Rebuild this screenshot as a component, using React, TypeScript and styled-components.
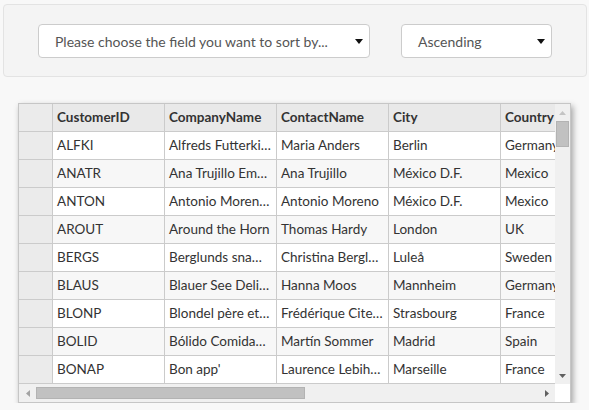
import styled, { createGlobalStyle } from "styled-components"

const GlobalStyle = createGlobalStyle`
  body {
    margin: 0;
    background: #f8f8f8;
    font-family: Lato, "Liberation Sans", sans-serif;
  }
`

const Page = styled.div`
  padding: 4px 2px 0 3px;
`

const SortPanel = styled.div`
  display: flex;
  gap: 31px;
  padding: 19px 34px 18px;
  border: 1px solid #e3e3e3;
  border-radius: 4px;
  background: #f4f4f4;
`

const Select = styled.div<{ $width: number }>`
  width: ${({ $width }) => $width}px;
  height: 34px;
  box-sizing: border-box;
  display: flex;
  align-items: center;
  justify-content: space-between;
  padding: 0 6px 0 16px;
  border: 1px solid #cccccc;
  border-radius: 4px;
  background: #fff;
  color: #555;
  font-size: 14px;
`

const Grid = styled.div`
  margin: 26px 0 0 15px;
  width: 553px;
  box-sizing: border-box;
  display: grid;
  grid-template-columns: 1fr 15px;
  grid-template-rows: 280px 18px;
  border: 1px solid #c6c6c6;
  background: #fff;
  box-shadow: 2px 3px 6px rgba(0, 0, 0, 0.35);
`

const Viewport = styled.div`
  overflow: hidden;
`

const Row = styled.div<{ $alt?: boolean; $head?: boolean }>`
  display: flex;
  width: max-content;
  background: ${({ $alt, $head }) => ($head ? "#e9e9e9" : $alt ? "#f7f7f7" : "#fff")};
  font-weight: ${({ $head }) => ($head ? 700 : 400)};
`

const Cell = styled.div<{ $stub?: boolean }>`
  width: ${({ $stub }) => ($stub ? 34 : 112)}px;
  height: 28px;
  box-sizing: border-box;
  padding: 0 3px 0 4px;
  border-right: 1px solid #cbcbcb;
  border-bottom: 1px solid #cbcbcb;
  background: ${({ $stub }) => ($stub ? "#ebebeb" : "transparent")};
  color: #333;
  font-size: 13.5px;
  line-height: 27px;
  white-space: nowrap;
  overflow: hidden;
`

const VScroll = styled.div`
  display: flex;
  flex-direction: column;
  background: #f0f0f0;
`

const HScroll = styled.div`
  display: flex;
  align-items: center;
  background: #f0f0f0;
`

const ArrowBox = styled.div<{ $size: number }>`
  flex: 0 0 ${({ $size }) => $size}px;
  display: flex;
  align-items: center;
  justify-content: center;
`

const Thumb = styled.div<{ $w: string; $h: string }>`
  width: ${({ $w }) => $w};
  height: ${({ $h }) => $h};
  box-sizing: border-box;
  background: #c1c1c1;
  border: 1px solid #b3b3b3;
`

const Spacer = styled.div`
  flex: 1;
`

const Corner = styled.div`
  background: #fff;
`

const Triangle = ({ dir, color, size = 7 }: { dir: "up" | "down" | "left" | "right"; color: string; size?: number }) => {
  const h = Math.round(size * 0.6)
  const pts = {
    down: `0,0 ${size},0 ${size / 2},${h}`,
    up: `0,${h} ${size},${h} ${size / 2},0`,
    left: `${h},0 ${h},${size} 0,${size / 2}`,
    right: `0,0 0,${size} ${h},${size / 2}`,
  }[dir]
  const vertical = dir === "up" || dir === "down"
  return (
    <svg width={vertical ? size : h} height={vertical ? h : size}>
      <polygon points={pts} fill={color} />
    </svg>
  )
}

const columns = ["CustomerID", "CompanyName", "ContactName", "City", "Country"]

const rows = [
  ["ALFKI", "Alfreds Futterki…", "Maria Anders", "Berlin", "Germany"],
  ["ANATR", "Ana Trujillo Em…", "Ana Trujillo", "México D.F.", "Mexico"],
  ["ANTON", "Antonio Moren…", "Antonio Moreno", "México D.F.", "Mexico"],
  ["AROUT", "Around the Horn", "Thomas Hardy", "London", "UK"],
  ["BERGS", "Berglunds sna…", "Christina Bergl…", "Luleå", "Sweden"],
  ["BLAUS", "Blauer See Deli…", "Hanna Moos", "Mannheim", "Germany"],
  ["BLONP", "Blondel père et…", "Frédérique Cite…", "Strasbourg", "France"],
  ["BOLID", "Bólido Comida…", "Martín Sommer", "Madrid", "Spain"],
  ["BONAP", "Bon app'", "Laurence Lebih…", "Marseille", "France"],
]

export default function App() {
  return (
    <Page>
      <GlobalStyle />
      <SortPanel>
        <Select $width={332}>
          <span>Please choose the field you want to sort by...</span>
          <Triangle dir="down" color="#111" size={8} />
        </Select>
        <Select $width={151}>
          <span>Ascending</span>
          <Triangle dir="down" color="#111" size={8} />
        </Select>
      </SortPanel>

      <Grid>
        <Viewport>
          <Row $head>
            <Cell $stub />
            {columns.map((c) => (
              <Cell key={c}>{c}</Cell>
            ))}
          </Row>
          {rows.map((r, i) => (
            <Row key={r[0]} $alt={i % 2 === 1}>
              <Cell $stub />
              {r.map((v, j) => (
                <Cell key={j}>{v}</Cell>
              ))}
            </Row>
          ))}
        </Viewport>
        <VScroll>
          <ArrowBox $size={17}>
            <Triangle dir="up" color="#c4c4c4" />
          </ArrowBox>
          <ArrowBox $size={26}>
            <Thumb $w="13px" $h="26px" />
          </ArrowBox>
          <Spacer />
          <ArrowBox $size={17}>
            <Triangle dir="down" color="#606060" />
          </ArrowBox>
        </VScroll>
        <HScroll>
          <ArrowBox $size={17}>
            <Triangle dir="left" color="#a3a3a3" />
          </ArrowBox>
          <Thumb $w="269px" $h="12px" />
          <Spacer />
          <ArrowBox $size={17}>
            <Triangle dir="right" color="#606060" />
          </ArrowBox>
        </HScroll>
        <Corner />
      </Grid>
    </Page>
  )
}
